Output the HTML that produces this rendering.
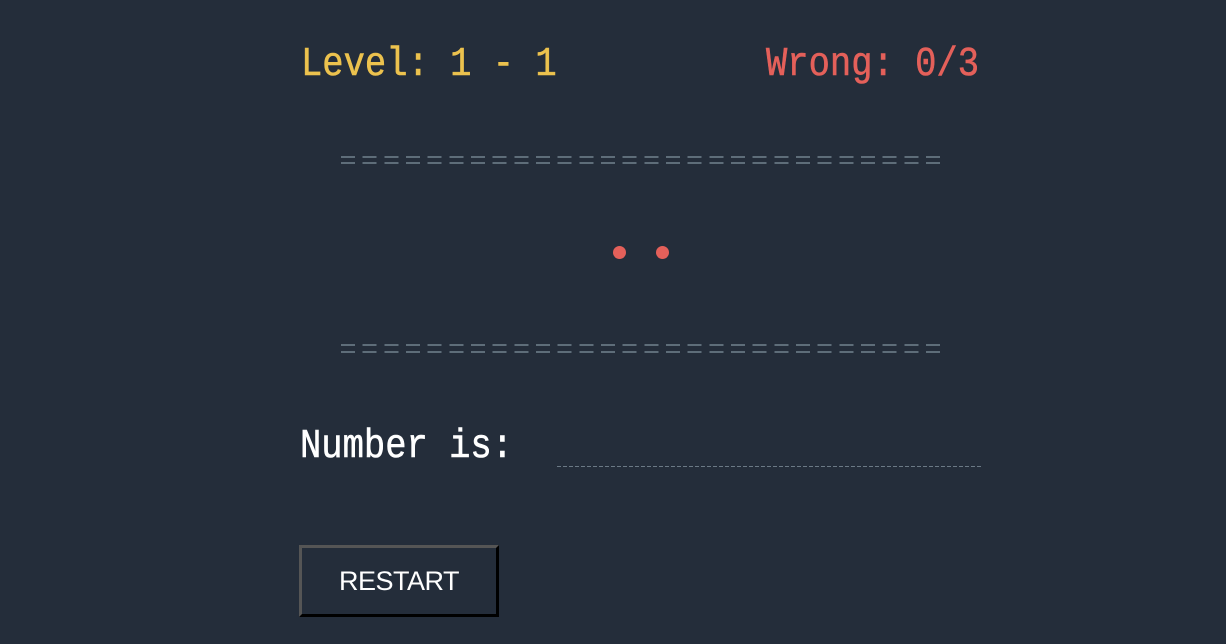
<!DOCTYPE html>
<html><head><meta charset="utf-8"><style>
html,body{margin:0;padding:0;background:#242d3a;width:1226px;height:644px;overflow:hidden;position:relative}
.t{position:absolute;font-family:"Liberation Mono","DejaVu Sans Mono",monospace;font-size:35.5px;line-height:1;white-space:pre;transform-origin:0 0;transform:scaleY(1.15);-webkit-text-stroke:0.5px currentColor}
.eq{position:absolute;left:341px;width:600px;height:2px;background:repeating-linear-gradient(90deg,#5e6d79 0 14px,transparent 14px 21.67px)}
.dot{position:absolute;width:13px;height:13px;border-radius:50%;background:#e4605a}
.btn{position:absolute;left:299px;top:545px;width:194px;height:66px;border:3px solid;border-color:#555 #000 #000 #555;background:#242d3a;color:#fff;font:27px "Liberation Sans",Arial,sans-serif;letter-spacing:-0.5px;display:flex;align-items:center;justify-content:center}
</style></head><body>
<div class="t" style="left:301px;top:44px;color:#ecc24e">Level: 1 - 1</div>
<div class="t" style="left:766px;top:44px;color:#e4605a">Wrong: 0/3</div>
<div class="eq" style="top:156px"></div>
<div class="eq" style="top:162px"></div>
<div class="dot" style="left:613px;top:246px"></div>
<div class="dot" style="left:656px;top:246px"></div>
<div class="eq" style="top:344px"></div>
<div class="eq" style="top:351px"></div>
<div class="t" style="left:300px;top:426px;color:#fff">Number is:</div>
<div style="position:absolute;left:557px;top:466px;width:426px;height:1px;background:repeating-linear-gradient(90deg,#6b7985 0 4px,transparent 4px 6px)"></div>
<div class="btn">RESTART</div>
</body></html>
